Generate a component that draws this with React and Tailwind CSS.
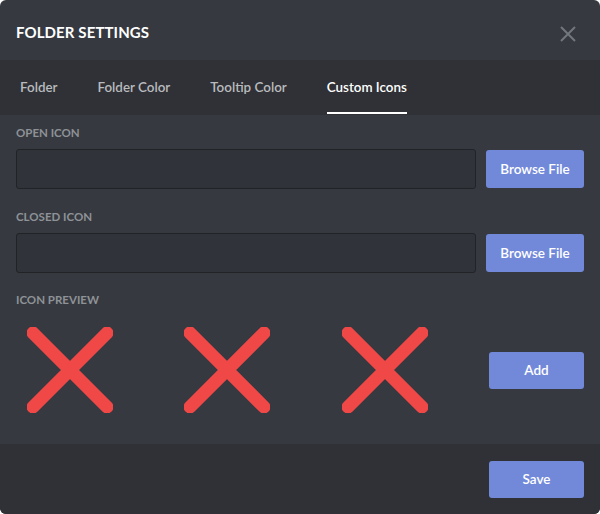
import React from "react";

function RedX() {
  return (
    <svg width="86" height="86" viewBox="0 0 86 86" className="block">
      <path d="M6 6 L80 80 M80 6 L6 80" stroke="#f04747" strokeWidth="13" strokeLinecap="round" />
    </svg>
  );
}

function Label({ children, className = "" }) {
  return (
    <div className={"text-[11.5px] font-bold text-[#8e9297] uppercase h-[20px] leading-[20px] mb-[6px] " + className}>
      {children}
    </div>
  );
}

export default function App() {
  const font = { fontFamily: "Lato, 'Open Sans', sans-serif" };
  return (
    <div className="w-[600px] h-[514px] bg-white" style={font}>
      <div className="w-full h-full rounded-[6px] overflow-hidden flex flex-col bg-[#36393f]">
        <div className="h-[60px] flex items-center justify-between pl-4 pr-6 pt-[5px] shrink-0">
          <div className="text-white font-bold text-[15px] tracking-[0.1px]">FOLDER SETTINGS</div>
          <svg width="16" height="16" viewBox="0 0 16 16" className="mt-[2px]">
            <path d="M1 1 L15 15 M15 1 L1 15" stroke="#72767d" strokeWidth="2" />
          </svg>
        </div>
        <div className="h-[55px] bg-[#2f3136] flex items-stretch pl-5 shrink-0 text-[13.4px] font-semibold">
          <div className="flex items-center text-[#b9bbbe] mr-10">Folder</div>
          <div className="flex items-center text-[#b9bbbe] mr-10">Folder Color</div>
          <div className="flex items-center text-[#b9bbbe] mr-10">Tooltip Color</div>
          <div className="flex items-center text-white relative">
            Custom Icons
            <div className="absolute left-0 right-0 bottom-[1px] h-[2px] bg-white"></div>
          </div>
        </div>
        <div className="flex-1 px-4 pt-[8px]">
          <Label>Open Icon</Label>
          <div className="flex items-center gap-[10px]">
            <div className="h-[40px] flex-1 bg-[#303339] border border-[#222327] rounded-[3px]"></div>
            <button className="w-[98px] h-[38px] bg-[#7289da] rounded-[3px] text-white text-[13.5px] font-semibold">Browse File</button>
          </div>
          <Label className="mt-[18px]">Closed Icon</Label>
          <div className="flex items-center gap-[10px]">
            <div className="h-[40px] flex-1 bg-[#303339] border border-[#222327] rounded-[3px]"></div>
            <button className="w-[98px] h-[38px] bg-[#7289da] rounded-[3px] text-white text-[13.5px] font-semibold">Browse File</button>
          </div>
          <Label className="mt-[17px]">Icon Preview</Label>
          <div className="flex items-center mt-[17px]">
            <div className="ml-[11px]"><RedX /></div>
            <div className="ml-[71px]"><RedX /></div>
            <div className="ml-[72px]"><RedX /></div>
            <button className="ml-auto w-[95px] h-[37px] bg-[#7289da] rounded-[3px] text-white text-[13.5px] font-semibold">Add</button>
          </div>
        </div>
        <div className="h-[70px] bg-[#2f3136] shrink-0 flex items-center justify-end pr-4">
          <button className="w-[95px] h-[37px] bg-[#7289da] rounded-[3px] text-white text-[13.5px] font-semibold">Save</button>
        </div>
      </div>
    </div>
  );
}
